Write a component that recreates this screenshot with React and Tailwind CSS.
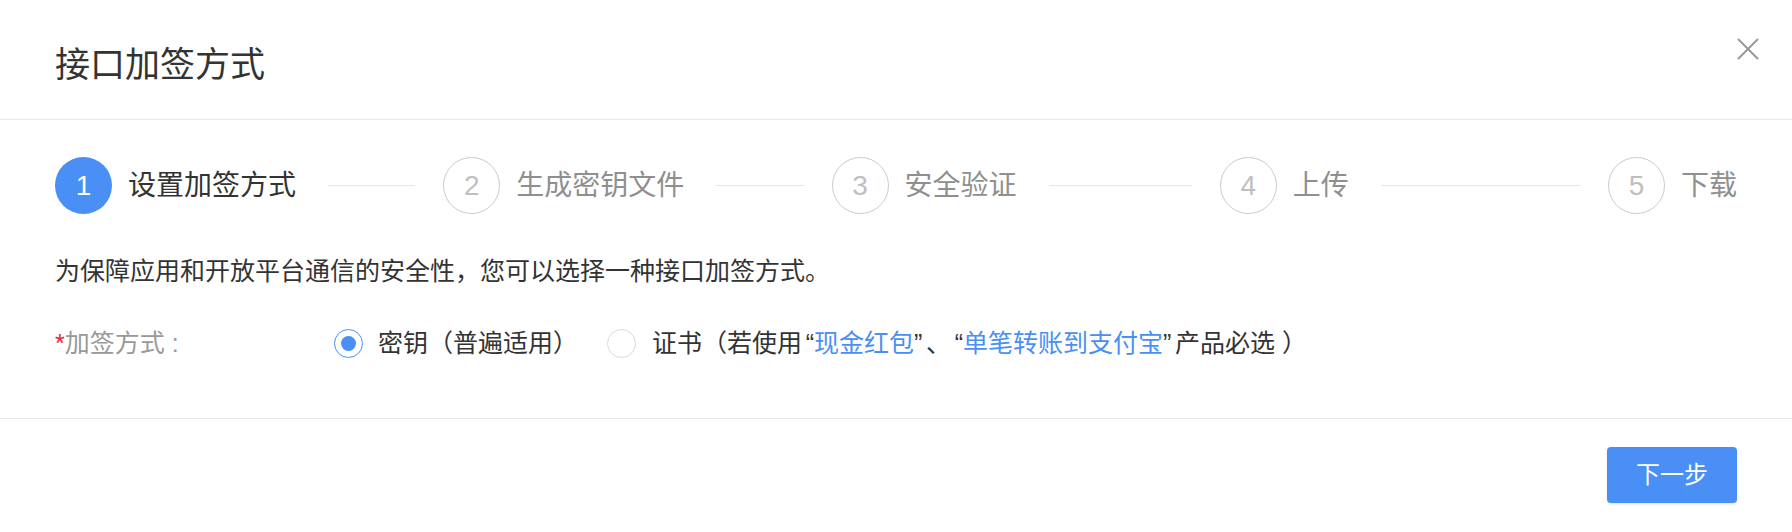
const steps = ['设置加签方式', '生成密钥文件', '安全验证', '上传', '下载'];

function Steps() {
    return (
        <div className="flex items-center h-[57px]">
            {steps.map((title, i) => {
                const active = i === 0;
                const last = i === steps.length - 1;
                return (
                    <div key={title} className={last ? 'flex items-center shrink-0' : 'flex items-center flex-1'}>
                        <div
                            className={`w-[57px] h-[57px] shrink-0 rounded-full flex items-center justify-center text-[28px] leading-none ${
                                active ? 'bg-[#4a8ff5] text-white' : 'border border-[#cccccc] text-[#bfbfbf]'
                            }`}
                        >
                            {i + 1}
                        </div>
                        <span className={`ml-4 text-[28px] leading-[34px] whitespace-nowrap ${active ? 'text-[#333]' : 'text-[#8f8f8f]'}`}>
                            {title}
                        </span>
                        {!last && <div className="flex-1 h-px bg-[#e6e6e6] ml-[32px] mr-[28px]" />}
                    </div>
                );
            })}
        </div>
    );
}

function Radio({ checked }) {
    return (
        <span
            className={`w-[29px] h-[29px] shrink-0 rounded-full border flex items-center justify-center ${
                checked ? 'border-[#4a8ff5]' : 'border-[#d9d9d9]'
            }`}
        >
            {checked && <span className="w-[15px] h-[15px] rounded-full bg-[#4a8ff5]" />}
        </span>
    );
}

// quotes in the reference sit a bit wider than Arial's
const Open = () => <span className="inline-block w-[12px] text-right">“</span>;
const Close = () => <span className="inline-block w-[12px] text-left">”</span>;

export default function App() {
    return (
        <div className="w-[1792px] h-[532px] bg-white flex flex-col text-[#333] font-['Liberation_Sans','Noto_Sans_CJK_SC',sans-serif]">
            {/* Header */}
            <header className="h-[120px] shrink-0 border-b border-[#e8e8e8] flex justify-between items-start pl-[55px] pr-[33px]">
                <h1 className="mt-[45px] text-[35px] leading-[40px] font-normal text-[#333]">接口加签方式</h1>
                <button className="mt-[38px] w-[22px] h-[22px] text-[#999]">
                    <svg viewBox="0 0 22 22" className="w-[22px] h-[22px]" fill="none" stroke="currentColor" strokeWidth="2">
                        <path d="M1 1L21 21M21 1L1 21" />
                    </svg>
                </button>
            </header>

            {/* Body */}
            <main className="h-[299px] shrink-0 border-b border-[#e8e8e8] px-[55px] pt-[37px]">
                <Steps />

                <p className="mt-[40px] text-[25px] leading-[34px] text-[#333]">
                    为保障应用和开放平台通信的安全性，您可以选择一种接口加签方式。
                </p>

                <div className="mt-[38px] h-[34px] flex items-center text-[25px] leading-[34px] whitespace-nowrap">
                    <label className="w-[279px] shrink-0 text-[#999]">
                        <span className="text-[#f5222d]">*</span>加签方式<span className="ml-[7px]">:</span>
                    </label>
                    <Radio checked />
                    <span className="ml-[15px]">密钥（普遍适用）</span>
                    <span className="ml-[29px]">
                        <Radio />
                    </span>
                    <span className="ml-[16px]">
                        证书（若使用<Open />
                        <span className="text-[#4a8ff5]">现金红包</span>
                        <Close />、<Open />
                        <span className="text-[#4a8ff5]">单笔转账到支付宝</span>
                        <Close />产品必选 ）
                    </span>
                </div>
            </main>

            {/* Footer */}
            <footer className="flex-1 flex justify-end items-start pt-[28px] px-[55px]">
                <button className="w-[130px] h-[56px] rounded bg-[#4a8ff5] text-white text-[24px] leading-none shadow-sm">
                    下一步
                </button>
            </footer>
        </div>
    );
}
